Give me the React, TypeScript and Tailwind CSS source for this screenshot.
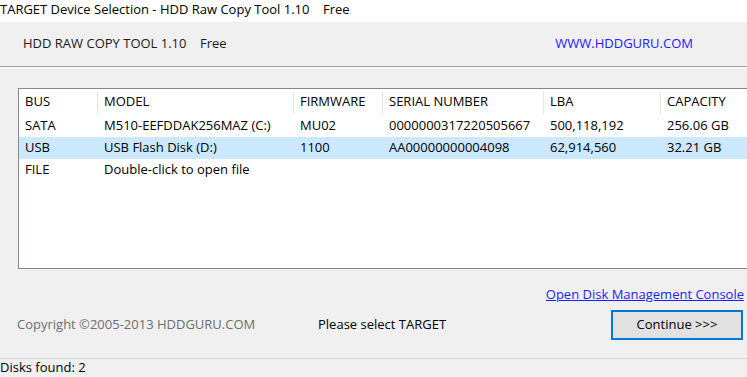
import React from 'react';

const columns = [
  { label: 'BUS', w: 'w-[79px]' },
  { label: 'MODEL', w: 'w-[196px]' },
  { label: 'FIRMWARE', w: 'w-[89px]' },
  { label: 'SERIAL NUMBER', w: 'w-[161px]' },
  { label: 'LBA', w: 'w-[117px]' },
  { label: 'CAPACITY', w: 'w-[100px]' },
];

const rows = [
  ['SATA', 'M510-EEFDDAK256MAZ (C:)', 'MU02', '0000000317220505667', '500,118,192', '256.06 GB'],
  ['USB', 'USB Flash Disk (D:)', '1100', 'AA00000000004098', '62,914,560', '32.21 GB'],
  ['FILE', 'Double-click to open file', '', '', '', ''],
];

function App() {
  return (
    <div className="w-[747px] h-[377px] overflow-hidden bg-[#f0f0f0] text-[13px] text-black font-['Segoe_UI','Open_Sans',sans-serif] flex flex-col">
      {/* title */}
      <div className="h-[22px] bg-white flex items-start pt-px shrink-0">
        <span className="leading-[16px]">TARGET Device Selection - HDD Raw Copy Tool 1.10&nbsp;&nbsp;&nbsp; Free</span>
      </div>

      {/* header */}
      <div className="h-[44px] flex items-center pl-[23px] shrink-0">
        <span className="text-[#1a1a1a]">HDD RAW COPY TOOL 1.10&nbsp;&nbsp;&nbsp;&nbsp;Free</span>
        <span className="ml-auto mr-[54px] text-[#2020ff]">WWW.HDDGURU.COM</span>
      </div>
      <div className="h-px bg-[#a0a0a0]" />
      <div className="h-px bg-white" />

      {/* device list */}
      <div className="mt-[20px] ml-[18px] w-[760px] h-[181px] bg-white border border-[#828790] shrink-0">
        <div className="flex h-[26px] items-center">
          {columns.map((c, i) => (
            <div key={c.label} className={`${c.w} h-[23px] flex items-center pl-[6px] ${i < columns.length - 1 ? 'border-r border-[#e5e5e5]' : ''}`}>
              {c.label}
            </div>
          ))}
        </div>
        {rows.map((r, ri) => (
          <div key={ri} className={`flex h-[22px] items-center ${ri === 1 ? 'bg-[#cce8ff]' : ''}`}>
            {r.map((cell, ci) => (
              <div key={ci} className={`${columns[ci].w} pl-[6px] whitespace-nowrap ${ci < columns.length - 1 ? 'pr-px' : ''}`}>
                {cell}
              </div>
            ))}
          </div>
        ))}
      </div>

      {/* footer */}
      <div className="flex-1 flex flex-col">
        <div className="flex justify-end pr-[3px] mt-[16px]">
          <a className="text-[#1c1cff] underline leading-[18px]">Open Disk Management Console</a>
        </div>
        <div className="flex items-center mt-[7px]">
          <span className="ml-[17px] text-[#6d6d6d] w-[301px]">Copyright ©2005-2013 HDDGURU.COM</span>
          <span>Please select TARGET</span>
          <button className="ml-auto mr-[4px] w-[132px] h-[30px] bg-[#e1e1e1] border-2 border-[#0078d7] flex items-center justify-center">
            Continue &gt;&gt;&gt;
          </button>
        </div>
      </div>

      {/* status bar */}
      <div className="h-px bg-[#d7d7d7]" />
      <div className="h-[18px] flex items-center">
        <span>Disks found: 2</span>
      </div>
    </div>
  );
}

export default App;
